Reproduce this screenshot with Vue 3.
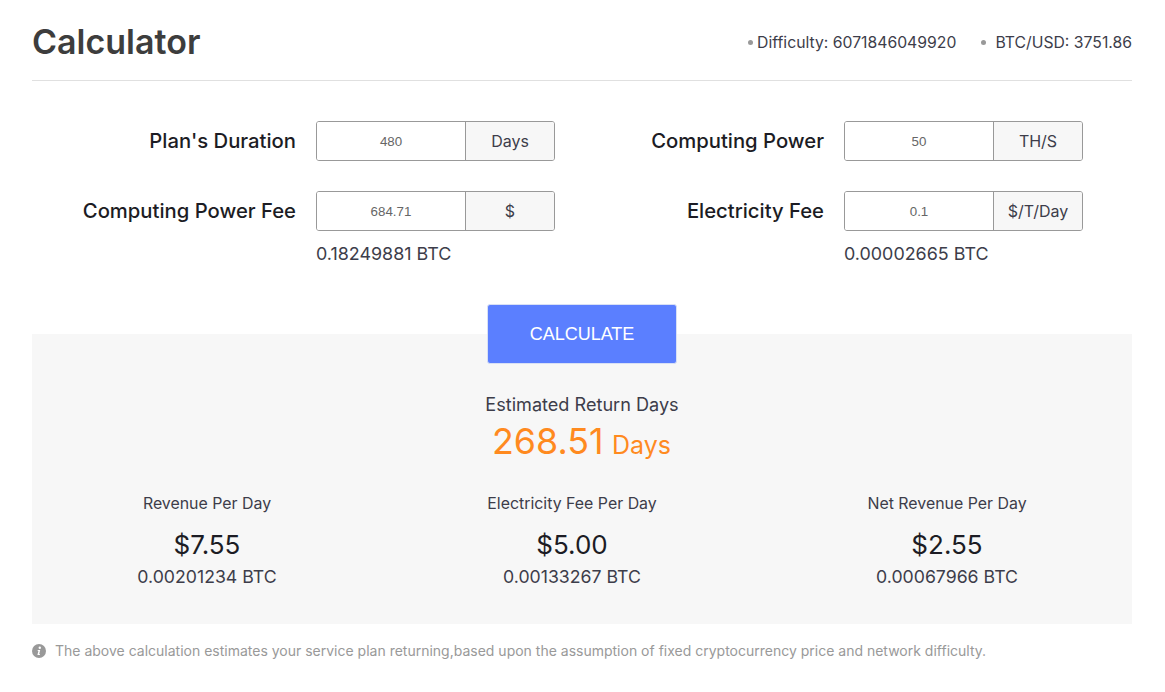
<script setup>
const fields = [
  { label: "Plan's Duration", value: '480', unit: 'Days' },
  { label: 'Computing Power', value: '50', unit: 'TH/S' },
  { label: 'Computing Power Fee', value: '684.71', unit: '$', note: '0.18249881 BTC' },
  { label: 'Electricity Fee', value: '0.1', unit: '$/T/Day', note: '0.00002665 BTC' },
]
const stats = [
  { title: 'Revenue Per Day', usd: '$7.55', btc: '0.00201234 BTC' },
  { title: 'Electricity Fee Per Day', usd: '$5.00', btc: '0.00133267 BTC' },
  { title: 'Net Revenue Per Day', usd: '$2.55', btc: '0.00067966 BTC' },
]
</script>

<template>
  <div class="page">
    <header class="head">
      <h1>Calculator</h1>
      <div class="meta">
        <span class="meta-item first"><i class="dot"></i>Difficulty: 6071846049920</span>
        <span class="meta-item second"><i class="dot"></i>BTC/USD: 3751.86</span>
      </div>
    </header>

    <section class="form">
      <div v-for="f in fields" :key="f.label" class="field">
        <label class="label">{{ f.label }}</label>
        <div class="control">
          <div class="box">
            <input class="input" :value="f.value" />
            <span class="unit">{{ f.unit }}</span>
          </div>
          <div v-if="f.note" class="note">{{ f.note }}</div>
        </div>
      </div>
    </section>

    <div class="action"><button class="btn">CALCULATE</button></div>

    <section class="panel">
      <div class="return-title">Estimated Return Days</div>
      <div class="return-value"><span class="num">268.51</span> <span class="days">Days</span></div>
      <div class="stats">
        <div v-for="s in stats" :key="s.title" class="stat">
          <div class="stat-title">{{ s.title }}</div>
          <div class="stat-usd">{{ s.usd }}</div>
          <div class="stat-btc">{{ s.btc }}</div>
        </div>
      </div>
    </section>

    <p class="foot">
      <svg class="info" width="14" height="14" viewBox="0 0 14 14">
        <circle cx="7" cy="7" r="7" fill="#999" />
        <circle cx="7.8" cy="3.8" r="1.2" fill="#fff" />
        <path d="M5.8 6h2.4l-1 4h.8l-.2.9H5.4l1-4h-.8z" fill="#fff" />
      </svg>
      <span>The above calculation estimates your service plan returning,based upon the assumption of fixed cryptocurrency price and network difficulty.</span>
    </p>
  </div>
</template>

<style>
html, body { background: #fff; }
</style>

<style scoped>
.page {
  width: 1100px;
  margin-left: 32px;
  font-family: Inter, "Liberation Sans", sans-serif;
  color: #3d3d4a;
}
.head {
  height: 80px;
  display: flex;
  align-items: center;
  justify-content: space-between;
  border-bottom: 1px solid #e0e0e0;
}
h1 {
  margin: 2px 0 0;
  font-size: 34px;
  font-weight: 600;
  color: #3d3d3d;
}
.meta { display: flex; font-size: 15.75px; color: #3d3d4a; margin-top: 4px; }
.meta-item { display: flex; align-items: center; }
.second { margin-left: 25px; }
.dot { width: 5px; height: 5px; border-radius: 50%; background: #999; }
.first .dot { margin-right: 4px; }
.second .dot { margin-right: 9px; }
.form {
  display: grid;
  grid-template-columns: 528px 528px;
  row-gap: 30px;
  padding-top: 40px;
}
.field { display: flex; align-items: flex-start; }
.label {
  width: 264px;
  margin-right: 20px;
  text-align: right;
  font-size: 20.25px;
  font-weight: 500;
  line-height: 40px;
  color: #1c1c24;
}
.box {
  display: flex;
  width: 239px;
  height: 40px;
  box-sizing: border-box;
  border: 1px solid #999;
  border-radius: 3px;
  overflow: hidden;
}
.input {
  width: 149px;
  box-sizing: border-box;
  border: 0;
  border-right: 1px solid #999;
  padding: 0;
  text-align: center;
  font: 13.33px "Liberation Sans", sans-serif;
  color: #666;
  outline: none;
  background: #fff;
}
.unit {
  flex: 1;
  text-align: center;
  line-height: 38px;
  font-size: 16px;
  color: #3d3d4a;
  background: #f7f7f7;
}
.note {
  font-size: 17.9px;
  line-height: 20px;
  margin-top: 13px;
  color: #3d3d4a;
}
.action {
  display: flex;
  justify-content: center;
  margin-top: 40px;
  margin-bottom: -30px;
  position: relative;
  z-index: 1;
  height: 60px;
}
.btn {
  width: 190px;
  height: 60px;
  border: 1px solid #d8e0f5;
  border-radius: 3px;
  background: #5b7fff;
  color: #fff;
  font: 18px "Liberation Sans", sans-serif;
}
.panel {
  height: 290px;
  box-sizing: border-box;
  background: #f7f7f7;
  padding-top: 58px;
  text-align: center;
}
.return-title { font-size: 18.1px; line-height: 24px; }
.return-value { line-height: 48px; margin-top: 1px; margin-left: -1px; color: #ff8a1f; }
.num { font-size: 35.8px; }
.days { font-size: 25px; margin-left: 4px; }
.stats {
  display: grid;
  grid-template-columns: 350px 380px 370px;
  margin-top: 20px;
  text-align: center;
}
.stat-title { font-size: 15.9px; line-height: 24px; }
.stat-usd { font-size: 26px; line-height: 34px; margin-top: 12px; color: #1c1c24; }
.stat-btc { font-size: 17.7px; line-height: 24px; margin-top: 3px; }
.foot {
  margin: 18px 0 0;
  display: flex;
  align-items: center;
  font-size: 14px;
  line-height: 18px;
  color: #999;
}
.info { margin-right: 9px; flex: none; }
</style>
